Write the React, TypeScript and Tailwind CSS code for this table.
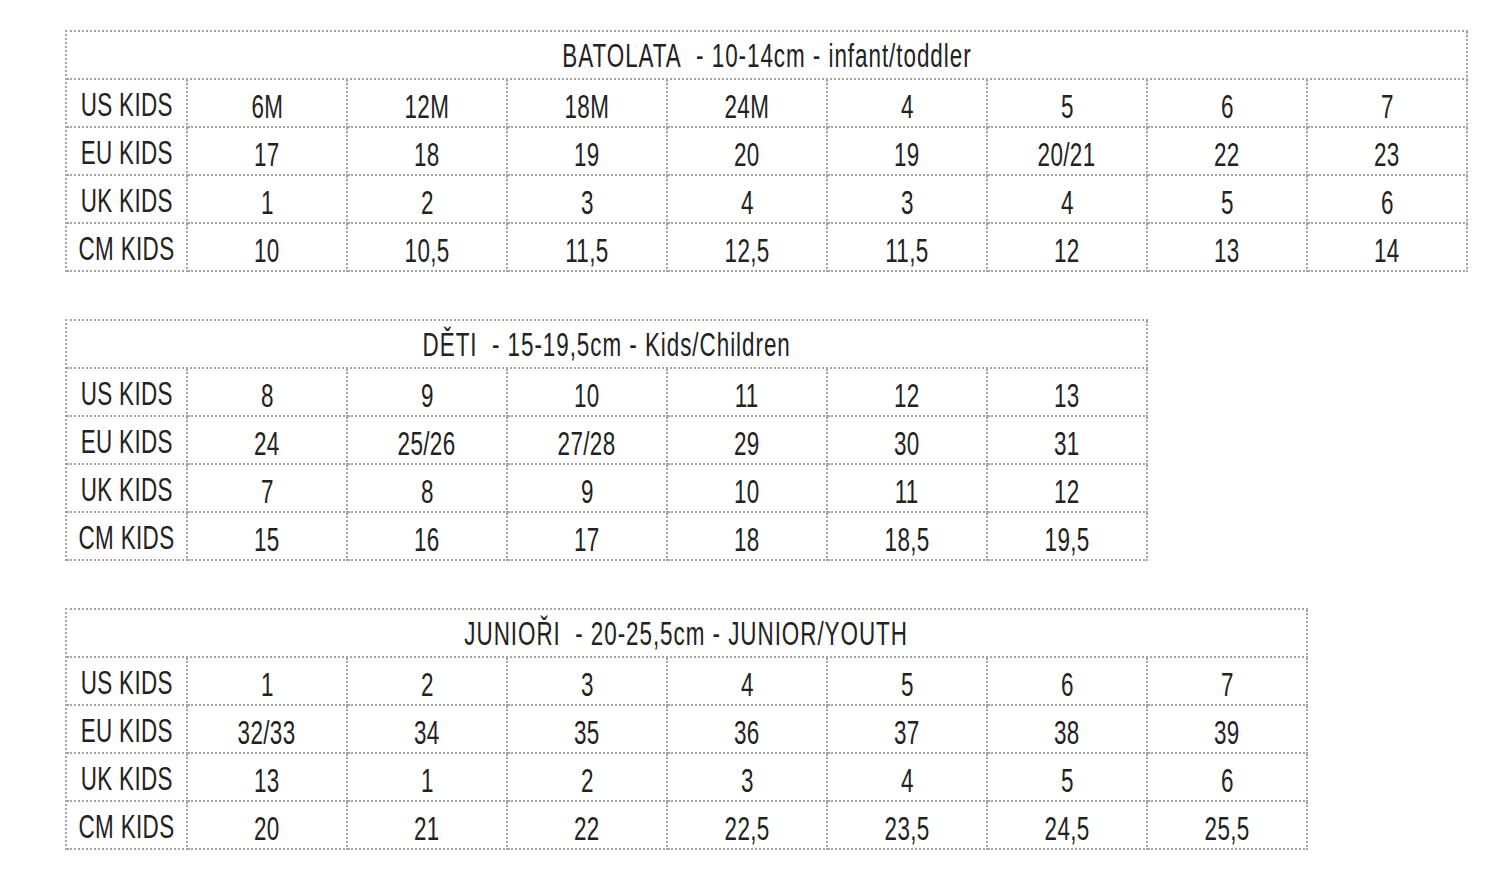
import React from "react";

type Table = {
  title: string;
  rows: { label: string; values: string[] }[];
};

const tables: Table[] = [
  {
    title: "BATOLATA\u00a0\u00a0- 10-14cm - infant/toddler",
    rows: [
      { label: "US KIDS", values: ["6M", "12M", "18M", "24M", "4", "5", "6", "7"] },
      { label: "EU KIDS", values: ["17", "18", "19", "20", "19", "20/21", "22", "23"] },
      { label: "UK KIDS", values: ["1", "2", "3", "4", "3", "4", "5", "6"] },
      { label: "CM KIDS", values: ["10", "10,5", "11,5", "12,5", "11,5", "12", "13", "14"] },
    ],
  },
  {
    title: "DĚTI\u00a0\u00a0- 15-19,5cm - Kids/Children",
    rows: [
      { label: "US KIDS", values: ["8", "9", "10", "11", "12", "13"] },
      { label: "EU KIDS", values: ["24", "25/26", "27/28", "29", "30", "31"] },
      { label: "UK KIDS", values: ["7", "8", "9", "10", "11", "12"] },
      { label: "CM KIDS", values: ["15", "16", "17", "18", "18,5", "19,5"] },
    ],
  },
  {
    title: "JUNIOŘI\u00a0\u00a0- 20-25,5cm - JUNIOR/YOUTH",
    rows: [
      { label: "US KIDS", values: ["1", "2", "3", "4", "5", "6", "7"] },
      { label: "EU KIDS", values: ["32/33", "34", "35", "36", "37", "38", "39"] },
      { label: "UK KIDS", values: ["13", "1", "2", "3", "4", "5", "6"] },
      { label: "CM KIDS", values: ["20", "21", "22", "22,5", "23,5", "24,5", "25,5"] },
    ],
  },
];

function Txt({ children }: { children: React.ReactNode }) {
  return (
    <span className="inline-block origin-center scale-x-[0.68] whitespace-nowrap tracking-[0.5px]">{children}</span>
  );
}

function TitleTxt({ children }: { children: React.ReactNode }) {
  return (
    <span className="inline-block origin-center scale-x-[0.68] whitespace-nowrap tracking-[1.4px]">{children}</span>
  );
}

function SizeTable({ t }: { t: Table }) {
  const n = t.rows[0].values.length;
  return (
    <div
      className="inline-grid border-t-2 border-l-2 border-dotted border-[#a4a4a4]"
      style={{ gridTemplateColumns: `121px repeat(${n}, 160px)` }}
    >
      <div className="col-span-full flex h-[48px] items-center justify-center border-r-2 border-b-2 border-dotted border-[#a4a4a4]">
        <TitleTxt>{t.title}</TitleTxt>
      </div>
      {t.rows.map((r) => (
        <React.Fragment key={r.label}>
          <div className="flex h-[48px] items-center justify-center border-r-2 border-b-2 border-dotted border-[#a4a4a4] pt-[3px]">
            <Txt>{r.label}</Txt>
          </div>
          {r.values.map((v, i) => (
            <div
              key={i}
              className="flex h-[48px] items-center justify-center border-r-2 border-b-2 border-dotted border-[#a4a4a4] pt-[7px]"
            >
              <Txt>{v}</Txt>
            </div>
          ))}
        </React.Fragment>
      ))}
    </div>
  );
}

export default function App() {
  return (
    <div
      className="min-h-[880px] w-[1500px] bg-white pl-[65px] pt-[30px] text-[33px] leading-none text-[#222222]"
      style={{ fontFamily: '"Liberation Sans", Arial, sans-serif' }}
    >
      <div className="flex flex-col items-start gap-[47px]">
        {tables.map((t) => (
          <SizeTable key={t.title} t={t} />
        ))}
      </div>
    </div>
  );
}
